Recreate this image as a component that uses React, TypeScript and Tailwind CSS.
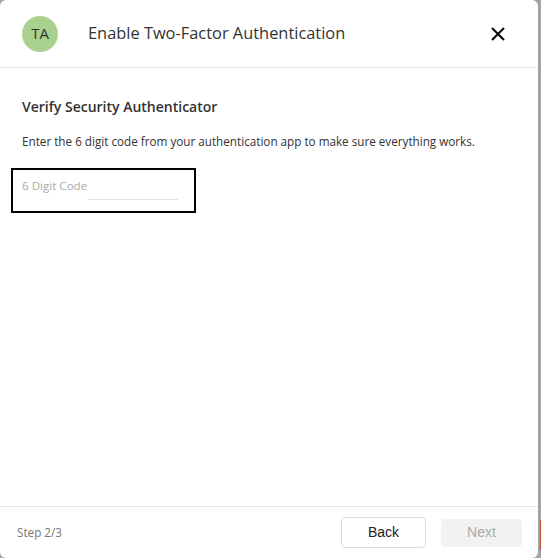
const App = () => {
  return (
    <div className="flex h-[558px] w-[541px] bg-[#a3a3a3] font-['Open_Sans',sans-serif]">
      <div className="flex h-full w-[538px] flex-col rounded-[6px] bg-white">
        {/* header */}
        <div className="flex h-[68px] items-center border-b border-[#e6e6e6] pl-[22px] pr-[33px]">
          <div className="flex h-[36px] w-[36px] items-center justify-center rounded-full bg-[#a9d18e] text-[15px] text-[#333]">
            TA
          </div>
          <div className="ml-[30px] flex-1 text-[16.4px] text-[#333]">Enable Two-Factor Authentication</div>
          <svg width="14" height="14" viewBox="0 0 14 14" className="text-black">
            <path d="M1 1L13 13M13 1L1 13" stroke="currentColor" strokeWidth="2" />
          </svg>
        </div>

        {/* body */}
        <div className="flex-1 px-[22px] pt-[28px]">
          <div className="text-[14px] font-semibold text-[#333]">Verify Security Authenticator</div>
          <div className="mt-[16px] text-[11.7px] text-[#333]">
            Enter the 6 digit code from your authentication app to make sure everything works.
          </div>
          <div className="-ml-[11px] mt-[17px] flex h-[45px] w-[185px] border-2 border-black pl-[9px] pt-[7px]">
            <span className="text-[11.6px] text-[#aaa]">6 Digit Code</span>
            <div className="ml-[1px] mt-[22px] h-px w-[90px] bg-[#e3e3e3]" />
          </div>
        </div>

        {/* footer */}
        <div className="flex h-[52px] items-center border-t border-[#e6e6e6] pl-[17px] pr-[16px]">
          <div className="flex-1 text-[11.7px] text-[#777]">Step 2/3</div>
          <button className="h-[31px] w-[85px] rounded-[4px] border border-[#dcdcdc] bg-white font-['Liberation_Sans',sans-serif] text-[14px] text-[#222]">
            Back
          </button>
          <button className="ml-[15px] h-[28px] w-[81px] rounded-[4px] bg-[#f2f2f2] font-['Liberation_Sans',sans-serif] text-[14px] text-[#aaa]">
            Next
          </button>
        </div>
      </div>
      <div className="flex flex-1 flex-col pt-[520px]">
        <div className="ml-auto h-[30px] w-[1px] bg-[#c0502f]" />
      </div>
    </div>
  );
};

export default App;
